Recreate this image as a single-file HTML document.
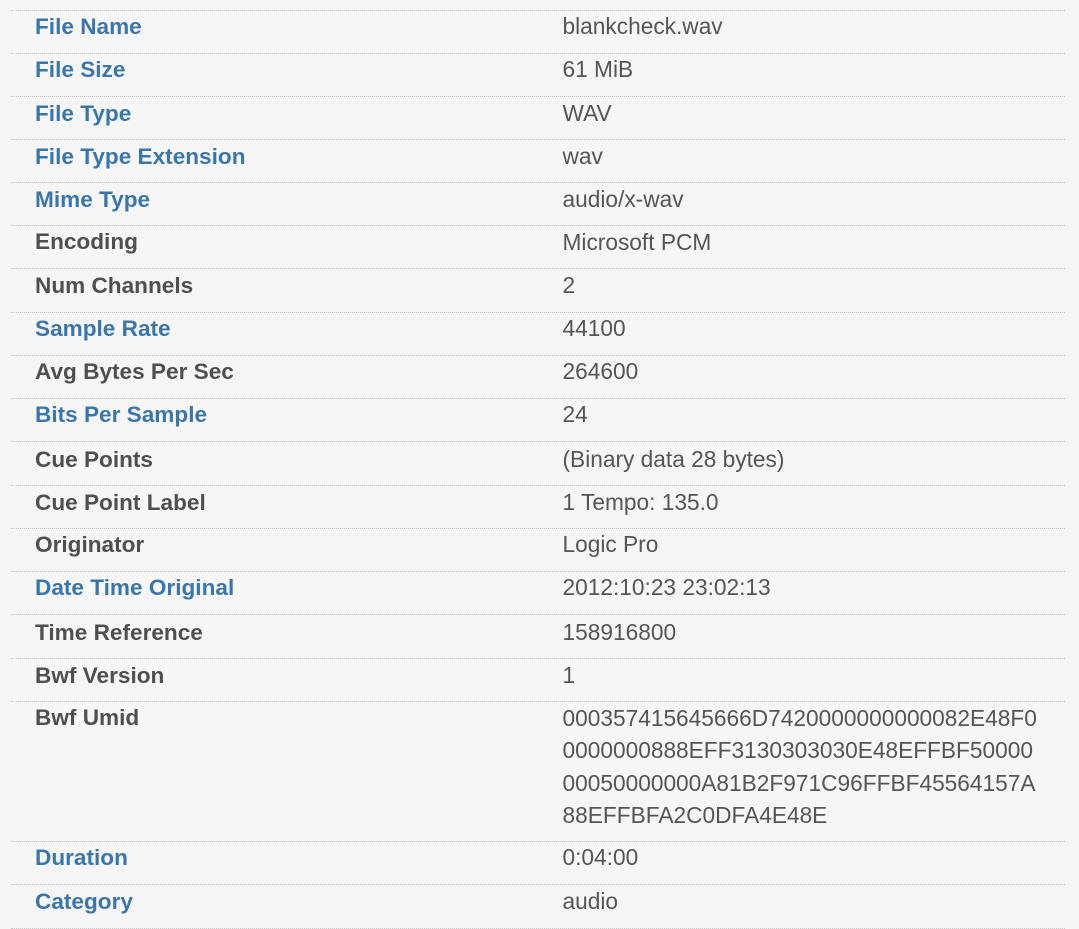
<!DOCTYPE html>
<html><head><meta charset="utf-8">
<style>
html,body{margin:0;padding:0;width:1079px;height:929px;overflow:hidden;background:#f6f6f6;}
body{position:relative;font-family:"Liberation Sans",Arial,sans-serif;font-size:22.7px;color:#555;}
.l{position:absolute;left:11px;width:1054px;height:0;border-top:1px dotted #c4c4c4;}
.k,.v{position:absolute;line-height:32px;white-space:nowrap;}
.k{left:35px;font-weight:bold;color:#4f4f4f;font-size:22.6px;margin-top:1px;}
.b{color:#3b76ab;}
.v{left:562.5px;}
</style></head><body>
<div class="l" style="top:10px"></div><div class="k b" style="top:10px">File Name</div><div class="v" style="top:10px">blankcheck.wav</div>
<div class="l" style="top:53px"></div><div class="k b" style="top:53px">File Size</div><div class="v" style="top:53px">61 MiB</div>
<div class="l" style="top:96px"></div><div class="k b" style="top:97px">File Type</div><div class="v" style="top:97px">WAV</div>
<div class="l" style="top:139px"></div><div class="k b" style="top:140px">File Type Extension</div><div class="v" style="top:140px">wav</div>
<div class="l" style="top:182px"></div><div class="k b" style="top:183px">Mime Type</div><div class="v" style="top:183px">audio/x-wav</div>
<div class="l" style="top:225px"></div><div class="k" style="top:225px">Encoding</div><div class="v" style="top:226px">Microsoft PCM</div>
<div class="l" style="top:268px"></div><div class="k" style="top:269px">Num Channels</div><div class="v" style="top:269px">2</div>
<div class="l" style="top:312px"></div><div class="k b" style="top:312px">Sample Rate</div><div class="v" style="top:312px">44100</div>
<div class="l" style="top:355px"></div><div class="k" style="top:355px">Avg Bytes Per Sec</div><div class="v" style="top:355px">264600</div>
<div class="l" style="top:398px"></div><div class="k b" style="top:398px">Bits Per Sample</div><div class="v" style="top:398px">24</div>
<div class="l" style="top:441px"></div><div class="k" style="top:443px">Cue Points</div><div class="v" style="top:443px">(Binary data 28 bytes)</div>
<div class="l" style="top:485px"></div><div class="k" style="top:486px">Cue Point Label</div><div class="v" style="top:486px">1 Tempo: 135.0</div>
<div class="l" style="top:528px"></div><div class="k" style="top:528px">Originator</div><div class="v" style="top:528px">Logic Pro</div>
<div class="l" style="top:571px"></div><div class="k b" style="top:571px">Date Time Original</div><div class="v" style="top:571px">2012:10:23 23:02:13</div>
<div class="l" style="top:614px"></div><div class="k" style="top:616px">Time Reference</div><div class="v" style="top:616px">158916800</div>
<div class="l" style="top:658px"></div><div class="k" style="top:659px">Bwf Version</div><div class="v" style="top:659px">1</div>
<div class="l" style="top:701px"></div><div class="k" style="top:701px">Bwf Umid</div>
<div class="v" style="top:702px;line-height:32.4px">000357415645666D7420000000000082E48F0<br>0000000888EFF3130303030E48EFFBF50000<br>00050000000A81B2F971C96FFBF45564157A<br>88EFFBFA2C0DFA4E48E</div>
<div class="l" style="top:841px"></div><div class="k b" style="top:841px">Duration</div><div class="v" style="top:841px">0:04:00</div>
<div class="l" style="top:884px"></div><div class="k b" style="top:885px">Category</div><div class="v" style="top:885px">audio</div>
<div class="l" style="top:928px"></div>
</body></html>
